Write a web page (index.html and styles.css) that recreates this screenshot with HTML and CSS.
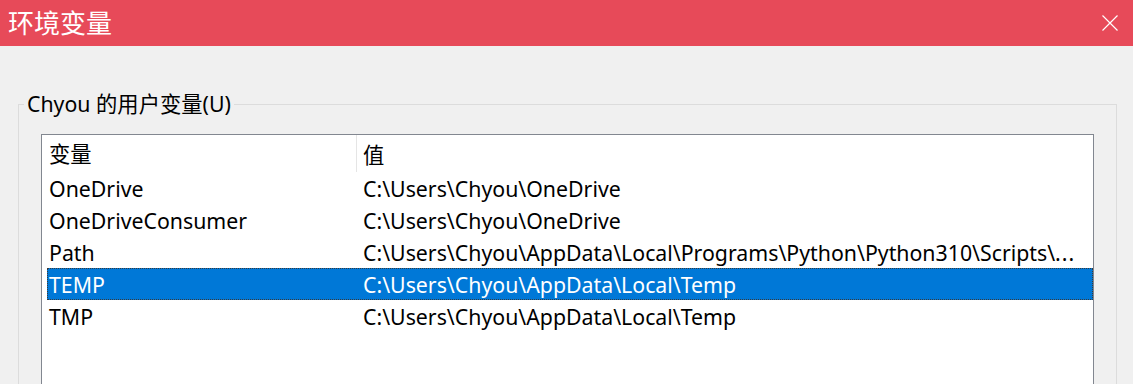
FILE: index.html
```html
<!DOCTYPE html>
<html lang="zh-CN">
<head>
    <meta charset="UTF-8">
    <meta name="viewport" content="width=device-width, initial-scale=1.0">
    <title>环境变量</title>
    <link rel="stylesheet" href="styles.css">
</head>
<body>
    <div class="titlebar">
        <span class="title">环境变量</span>
        <span class="close" aria-label="关闭">
            <svg width="16" height="16" viewBox="0 0 16 16">
                <path d="M0.5 0.5 L15.5 15.5 M15.5 0.5 L0.5 15.5" stroke="#fff" stroke-width="1.2" fill="none"/>
            </svg>
        </span>
    </div>

    <div class="content">
        <fieldset class="group">
            <legend>Chyou 的用户变量(U)</legend>

            <div class="listview">
                <div class="lv-head">
                    <div class="col-name">变量</div>
                    <div class="col-value">值</div>
                </div>
                <div class="lv-row">
                    <div class="col-name">OneDrive</div>
                    <div class="col-value">C:\Users\Chyou\OneDrive</div>
                </div>
                <div class="lv-row">
                    <div class="col-name">OneDriveConsumer</div>
                    <div class="col-value">C:\Users\Chyou\OneDrive</div>
                </div>
                <div class="lv-row">
                    <div class="col-name">Path</div>
                    <div class="col-value">C:\Users\Chyou\AppData\Local\Programs\Python\Python310\Scripts\<span class="dots">...</span></div>
                </div>
                <div class="lv-row selected">
                    <div class="col-name">TEMP</div>
                    <div class="col-value">C:\Users\Chyou\AppData\Local\Temp</div>
                </div>
                <div class="lv-row">
                    <div class="col-name">TMP</div>
                    <div class="col-value">C:\Users\Chyou\AppData\Local\Temp</div>
                </div>
            </div>
        </fieldset>
    </div>
</body>
</html>
```

FILE: styles.css
```css
html, body {
    width: 100%;
    height: 100%;
    margin: 0;
    padding: 0;
    overflow: hidden;
}

body {
    font-family: "Noto Sans", "Noto Sans CJK SC", sans-serif;
    font-size: 21.3px;
    color: #000;
    background-color: #f0f0f0;
}

.titlebar {
    height: 46px;
    background-color: #e74a59;
    color: #fff;
    display: flex;
    align-items: center;
    justify-content: space-between;
    padding: 0 15px 0 8px;
}

.title {
    font-family: "Noto Sans CJK SC", sans-serif;
    font-size: 26px;
    line-height: 30px;
    margin-top: -2px;
}

.close {
    display: flex;
    width: 16px;
    height: 16px;
    margin-top: -1px;
}

.content {
    padding: 44px 16px 0 18px;
}

.group {
    margin: 0;
    padding: 16px 22px 0 22px;
    border: 1px solid #dcdcdc;
    min-width: 0;
}

.group legend {
    padding: 0 3px;
    margin-left: -17px;
    line-height: 28px;
}

.listview {
    background-color: #fff;
    border: 1px solid #828790;
    padding-left: 5px;
    height: 300px;
}

.lv-head,
.lv-row {
    display: flex;
    align-items: center;
}

.lv-head {
    height: 37px;
}

.lv-row {
    height: 32px;
}

.col-name {
    width: 308px;
    padding-left: 2px;
    flex-shrink: 0;
    white-space: nowrap;
}

.col-value {
    flex-grow: 1;
    min-width: 0;
    padding: 0 10px 0 6px;
    white-space: nowrap;
    overflow: hidden;
}

.dots {
    letter-spacing: 1px;
}

.lv-head .col-name {
    height: 37px;
    line-height: 37px;
    border-right: 1px solid #e5e5e5;
    width: 307px;
}

.lv-row.selected {
    background-color: #0078d7;
    color: #fff;
    outline: 1px dotted #3a3a3a;
    outline-offset: -1px;
}
```
